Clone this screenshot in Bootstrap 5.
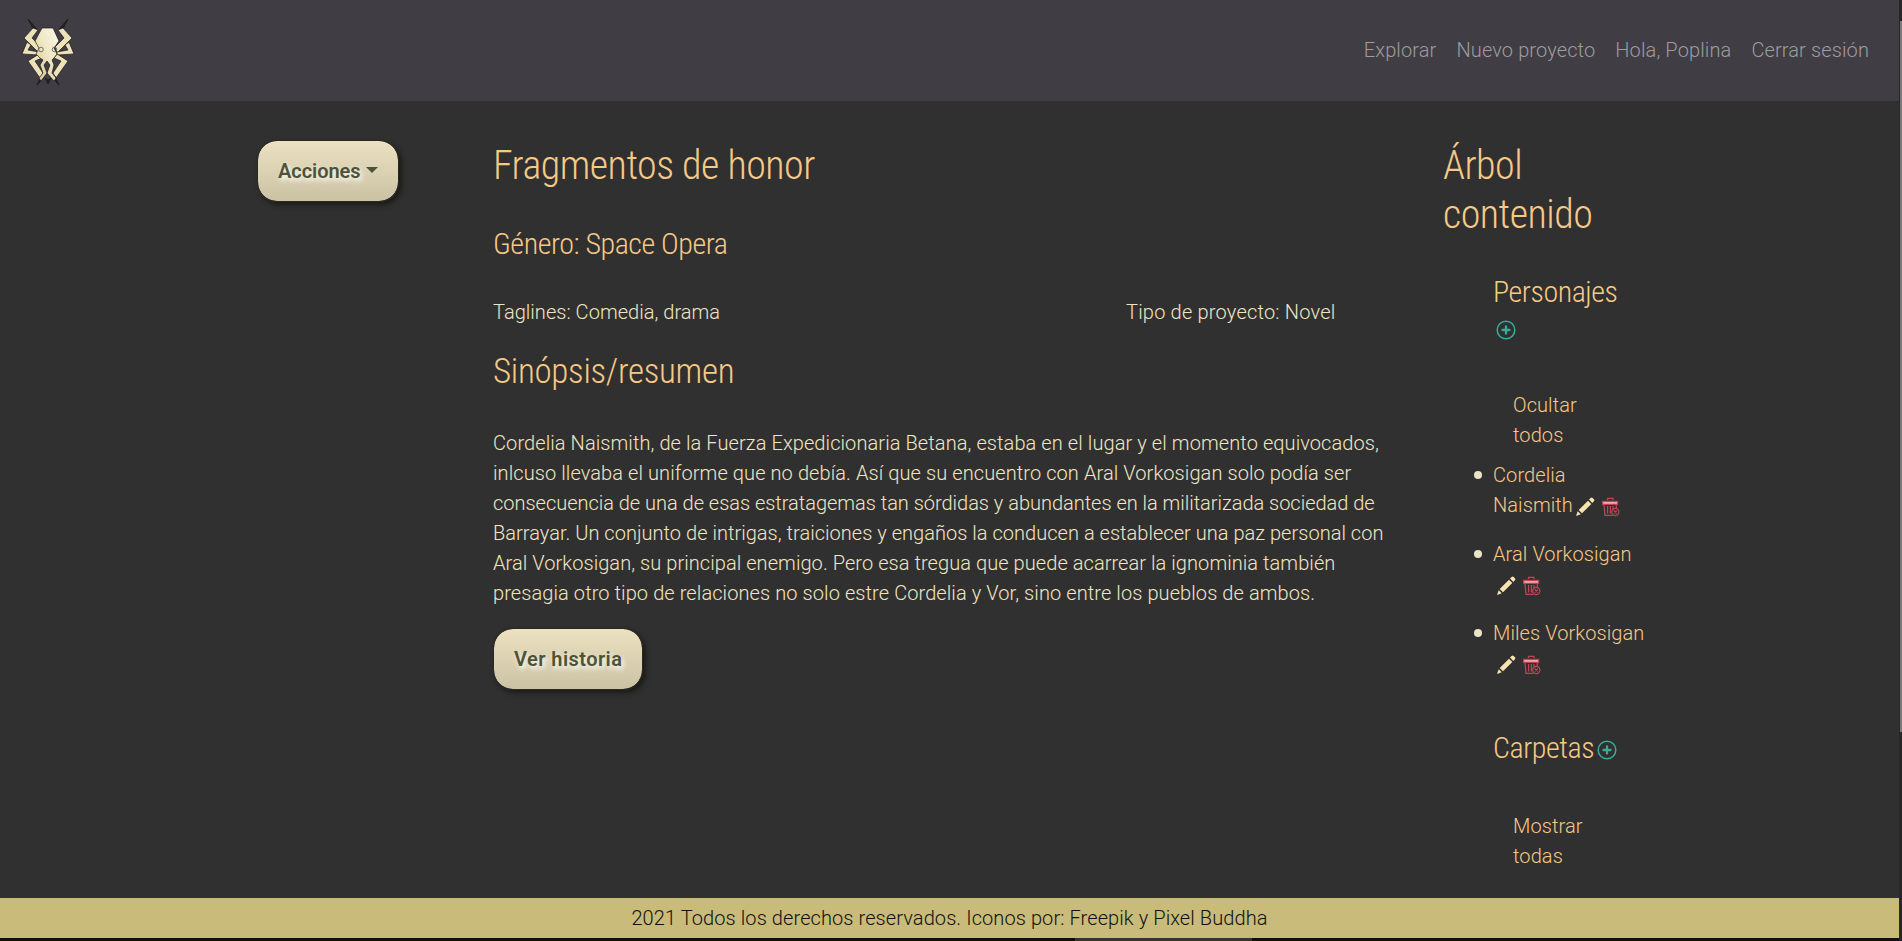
<!DOCTYPE html>
<html lang="es">
<head>
<meta charset="utf-8">
<meta name="viewport" content="width=device-width, initial-scale=1">
<title>Fragmentos de honor</title>
<link href="https://cdn.jsdelivr.net/npm/bootstrap@5.3.0/dist/css/bootstrap.min.css" rel="stylesheet">
<style>
html { font-size: 20px; }
body { background: #303030; color: #f0e6c5; font-family: Roboto, sans-serif; font-weight: 300; letter-spacing: .09px; height: 941px; overflow: hidden; }
h1, h2, h3 { font-family: Roboto, sans-serif; font-weight: 300; font-stretch: 75%; color: #f7c986; margin: 0; white-space: nowrap; }
h1 { font-size: 40px; line-height: 49px; letter-spacing: -.5px; }
h2 { font-size: 35px; line-height: 42px; letter-spacing: -.3px; }
h3 { font-size: 30px; line-height: 36px; letter-spacing: -.45px; }
a { color: #f7c986; text-decoration: none; }
.page-shell { width: 1899px; height: 938px; }
.topbar { height: 101px; background: #403d44; padding: 0 20px 0 19px; }
.topbar .nav-link { color: #9d9c9f; padding: 0 10px 1px; letter-spacing: .12px; }
.actions-col { width: 474px; padding: 39px 0 0 257px; }
.story-col { width: 950px; padding: 40px 19px 0; }
.tree-col { width: 220px; padding: 40px 0 0 19px; }
.btn-cream { --bs-btn-color: #4d5338; --bs-btn-hover-color: #4d5338; color: #4d5338; font-weight: 600; height: 62px; padding: 0 20px; border: 1px solid #292823; border-radius: 20px; background: linear-gradient(#ece2c2, #cbc2a4); background-clip: padding-box; box-shadow: 3px 3px 5px #1c1b17; text-shadow: 2px 3px 5px #fff; line-height: 30px; letter-spacing: .45px; }
.btn-cream.dropdown-toggle { letter-spacing: -.05px; }
.btn-cream.dropdown-toggle::after { margin-left: 5px; vertical-align: 5px; border-top-width: 6px; border-left-width: 6px; border-right-width: 6px; }
.story-tags { width: 633px; letter-spacing: .04px; }
.story-kind { letter-spacing: .2px; }
.synopsis { margin: 35px 0 20px; white-space: nowrap; }
.snug-1 { letter-spacing: -.02px; }
.snug-2 { letter-spacing: .03px; }
.snug-3 { letter-spacing: .065px; }
.tree-block { padding-left: 50px; }
.add-row { height: 80px; padding: 10px 0 0 3px; }
.tree-toggle { padding-left: 20px; }
.tree-list { padding-left: 50px; margin: 10px 0 0; white-space: nowrap; }
.tree-list li { margin-bottom: 19px; position: relative; }
.tree-list li::before { content: ""; position: absolute; left: -19px; top: 11px; width: 8px; height: 8px; border-radius: 50%; background: #ece4c8; }
.tree-list svg, .tree-block h3 svg { vertical-align: middle; }
.icon-pen { margin-left: 3px; }
.icon-pen.near { margin-left: 2px; }
.icon-bin { margin-left: 6px; }
.icon-add { margin-left: 3px; }
.site-foot { height: 40px; background: #c9bb79; color: #111; }
.scroll-y { width: 3px; height: 941px; background: #272727; }
.scroll-y div { margin: 21px 0 0 1px; height: 711px; background: #7b7b7b; }
.scroll-x { width: 1899px; height: 3px; background: #101010; }
.scroll-x div { margin-left: 1075px; width: 177px; height: 3px; background: #353535; }
</style>
</head>
<body>
<svg width="0" height="0" class="d-none">
  <defs>
  <symbol id="pen" viewBox="0 0 20 20"><path fill="#f7e3b0" d="M14 2.600 15.600 1q1-1 2.100 0l1.200 1.200q1 1 0 2.100L17.300 6zM13 3.700l3.300 3.300L7 16.300 3.700 13zM2.700 14.200 5.800 17.300 1 19z"/></symbol>
  <symbol id="bin" viewBox="0 0 20 20"><g fill="none" stroke="#c34356" stroke-width="1.200"><path d="M6.500 3V1.400h5.500V3M3 8l1 10.400h7.500M6.600 9v7.500M9.400 9v7.500M12 9v3.500M15.300 8v3"/><circle cx="14.300" cy="15" r="3.600"/><path d="M12.800 13.500l3 3m0-3l-3 3"/></g><rect x="1.600" y="4.400" width="15" height="3" fill="#f5a6a6" stroke="#c34356" stroke-width="1.200"/></symbol>
  <symbol id="plus" viewBox="0 0 20 20"><circle cx="10" cy="10" r="8.800" fill="none" stroke="#37ad99" stroke-width="1.500"/><path d="M10 6.500v7M6.500 10h7" stroke="#37ad99" stroke-width="2.300" stroke-linecap="round"/></symbol>
  </defs>
</svg>
<div class="d-flex">
<div>
<div class="page-shell d-flex flex-column">
  <nav class="topbar d-flex align-items-center justify-content-between">
    <a href="#" aria-label="Inicio"><svg width="58" height="68" viewBox="19 16 58 68" class="d-block">
      <defs><linearGradient id="lg" x1="0" x2="1" y1="1" y2="0"><stop offset="0" stop-color="#d3c48c"/><stop offset=".5" stop-color="#efe6c2"/><stop offset="1" stop-color="#fbf8ea"/></linearGradient></defs>
      <g stroke="#1b1b1b" stroke-width=".7" stroke-linejoin="miter">
        <g id="half">
          <path fill="#222" d="M28 18l8 9 1 3-4-2z"/>
          <path fill="#eee2b8" d="M33 27l5 2-6 8 9 9-2 6-15-15z"/>
          <path fill="#eee2b8" d="M27 41l4 3-3 5 11 2v3l-17-1z"/>
          <path fill="#eee2b8" d="M39 53l3 4-7 3 8 12-3 5-12-17z"/>
          <path fill="#222" d="M41 75l3 2-7 7z"/>
        </g>
        <use href="#half" transform="matrix(-1 0 0 1 96 0)"/>
        <path fill="#222" d="M45 77l3 2 3-2-3 6z"/>
        <path fill="url(#lg)" d="M42 27h11l6 13-5 7 3 6-3 4-2 2 2 5-2 8 4 5-2 3-7-8 3-8-3-4-3 4 3 8-6 8-2-3 4-5-3-8 3-5-3-2-4-4 3-6-4-7z"/>
      </g>
      <g fill="none" stroke="#666" stroke-width=".9"><circle cx="41" cy="48.500" r="2.300"/><circle cx="54.500" cy="48.500" r="2.300"/></g>
    </svg></a>
    <div class="nav flex-nowrap">
      <a class="nav-link" href="#">Explorar</a><a class="nav-link" href="#">Nuevo proyecto</a><a class="nav-link" href="#">Hola, Poplina</a><a class="nav-link" href="#">Cerrar sesión</a>
    </div>
  </nav>
  <main class="d-flex flex-grow-1 overflow-hidden">
    <div class="actions-col"><button class="btn btn-cream dropdown-toggle">Acciones</button></div>
    <section class="story-col">
      <h1>Fragmentos de honor</h1>
      <h3 style="margin-top:36px">Género: Space Opera</h3>
      <div class="d-flex" style="margin-top:35px"><div class="story-tags">Taglines: Comedia, drama</div><div class="story-kind">Tipo de proyecto: Novel</div></div>
      <h2 style="margin-top:24px">Sinópsis/resumen</h2>
      <p class="synopsis">Cordelia Naismith, de la Fuerza Expedicionaria Betana, estaba en el lugar y el momento equivocados,<br>inlcuso llevaba el uniforme que no debía. Así que su encuentro con Aral Vorkosigan solo podía ser<br><span class="snug-1">consecuencia de una de esas estratagemas tan sórdidas y abundantes en la militarizada sociedad de</span><br><span class="snug-2">Barrayar. Un conjunto de intrigas, traiciones y engaños la conducen a establecer una paz personal con</span><br><span class="snug-3">Aral Vorkosigan, su principal enemigo. Pero esa tregua que puede acarrear la ignominia también</span><br>presagia otro tipo de relaciones no solo estre Cordelia y Vor, sino entre los pueblos de ambos.</p>
      <button class="btn btn-cream">Ver historia</button>
    </section>
    <aside class="tree-col">
      <h1>Árbol<br>contenido</h1>
      <div class="tree-block" style="margin-top:35px"><h3>Personajes</h3>
        <div class="add-row"><svg class="d-block" width="20" height="20"><use href="#plus"/></svg></div>
        <div class="tree-toggle"><a href="#">Ocultar<br>todos</a></div></div>
      <ul class="tree-list list-unstyled">
        <li><a href="#">Cordelia<br>Naismith</a><svg width="20" height="20" class="icon-pen near"><use href="#pen"/></svg><svg width="20" height="20" class="icon-bin"><use href="#bin"/></svg></li>
        <li><a href="#">Aral Vorkosigan</a><br><svg width="20" height="20" class="icon-pen"><use href="#pen"/></svg><svg width="20" height="20" class="icon-bin"><use href="#bin"/></svg></li>
        <li><a href="#">Miles Vorkosigan</a><br><svg width="20" height="20" class="icon-pen"><use href="#pen"/></svg><svg width="20" height="20" class="icon-bin"><use href="#bin"/></svg></li>
      </ul>
      <div class="tree-block" style="margin-top:52px"><h3>Carpetas<svg width="20" height="20" class="icon-add"><use href="#plus"/></svg></h3>
        <div class="tree-toggle" style="margin-top:45px"><a href="#">Mostrar<br>todas</a></div></div>
    </aside>
  </main>
  <footer class="site-foot d-flex align-items-center justify-content-center">2021 Todos los derechos reservados. Iconos por: Freepik y Pixel Buddha</footer>
</div>
<div class="scroll-x"><div></div></div>
</div>
<div class="scroll-y d-flex flex-column"><div></div></div>
</div>
<script src="https://cdn.jsdelivr.net/npm/bootstrap@5.3.0/dist/js/bootstrap.bundle.min.js"></script>
</body>
</html>
